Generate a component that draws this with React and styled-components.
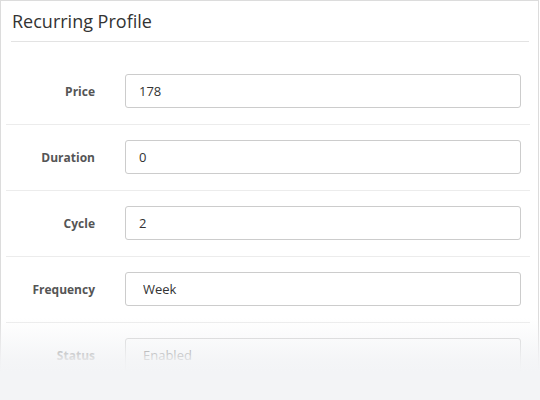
import React from "react";
import styled, { createGlobalStyle } from "styled-components";

const fields = [
  { label: "Price", value: "178" },
  { label: "Duration", value: "0" },
  { label: "Cycle", value: "2" },
  { label: "Frequency", value: "Week", select: true },
  { label: "Status", value: "Enabled", select: true },
];

const App = () => {
  return (
    <Page>
      <GlobalStyle />
      <Panel>
        <Header>
          <Title>Recurring Profile</Title>
        </Header>
        <Form>
          {fields.map((f) => (
            <Row key={f.label}>
              <Label>{f.label}</Label>
              {f.select ? (
                <Select defaultValue={f.value}>
                  <option>{f.value}</option>
                </Select>
              ) : (
                <Input defaultValue={f.value} />
              )}
            </Row>
          ))}
        </Form>
      </Panel>
      <Fade />
    </Page>
  );
};

export default App;

const GlobalStyle = createGlobalStyle`
  body {
    margin: 0;
    background: #fff;
    font-family: "Open Sans", "Liberation Sans", sans-serif;
    overflow: hidden;
  }
`;

const Page = styled.div`
  position: relative;
  width: 540px;
  height: 400px;
  overflow: hidden;
`;

const Panel = styled.div`
  width: 537px;
  height: 420px;
  border: 1px solid #dcdcdc;
  border-bottom: none;
`;

const Header = styled.div`
  margin: 0 9px 0 10px;
  height: 40px;
  border-bottom: 1px solid #e3e3e3;
  display: flex;
  align-items: center;
`;

const Title = styled.h3`
  margin: 0;
  padding-left: 1px;
  font-size: 18px;
  font-weight: 400;
  color: #333;
  line-height: 22px;
`;

const Form = styled.div`
  padding-top: 17px;
`;

const Row = styled.div`
  display: flex;
  align-items: center;
  margin: 0 8px 0 5px;
  padding: 15px 9px 16px 0;
  border-bottom: 1px solid #ececec;

  &:first-child {
    padding-top: 15px;
  }
`;

const Label = styled.label`
  width: 89px;
  margin-right: 30px;
  text-align: right;
  font-size: 12px;
  font-weight: 700;
  color: #555;
`;

const Input = styled.input`
  box-sizing: border-box;
  flex: 1;
  height: 34px;
  padding: 0 13px;
  border: 1px solid #ccc;
  border-radius: 3px;
  font-family: "Open Sans", "Liberation Sans", sans-serif;
  font-size: 13px;
  color: #333;
  background: #fff;
  outline: none;
`;

const Select = styled.select`
  box-sizing: border-box;
  flex: 1;
  height: 34px;
  padding: 0 17px;
  border: 1px solid #ccc;
  border-radius: 3px;
  font-family: "Open Sans", "Liberation Sans", sans-serif;
  font-size: 13px;
  color: #333;
  background: #fff;
  appearance: none;
  outline: none;
`;

const Fade = styled.div`
  position: absolute;
  left: 0;
  right: 0;
  bottom: 0;
  height: 82px;
  pointer-events: none;
  background: linear-gradient(
    to bottom,
    rgba(243, 244, 246, 0) 0%,
    rgba(243, 244, 246, 0.88) 50%,
    #f3f4f6 65%,
    #f3f4f6 100%
  );
`;
